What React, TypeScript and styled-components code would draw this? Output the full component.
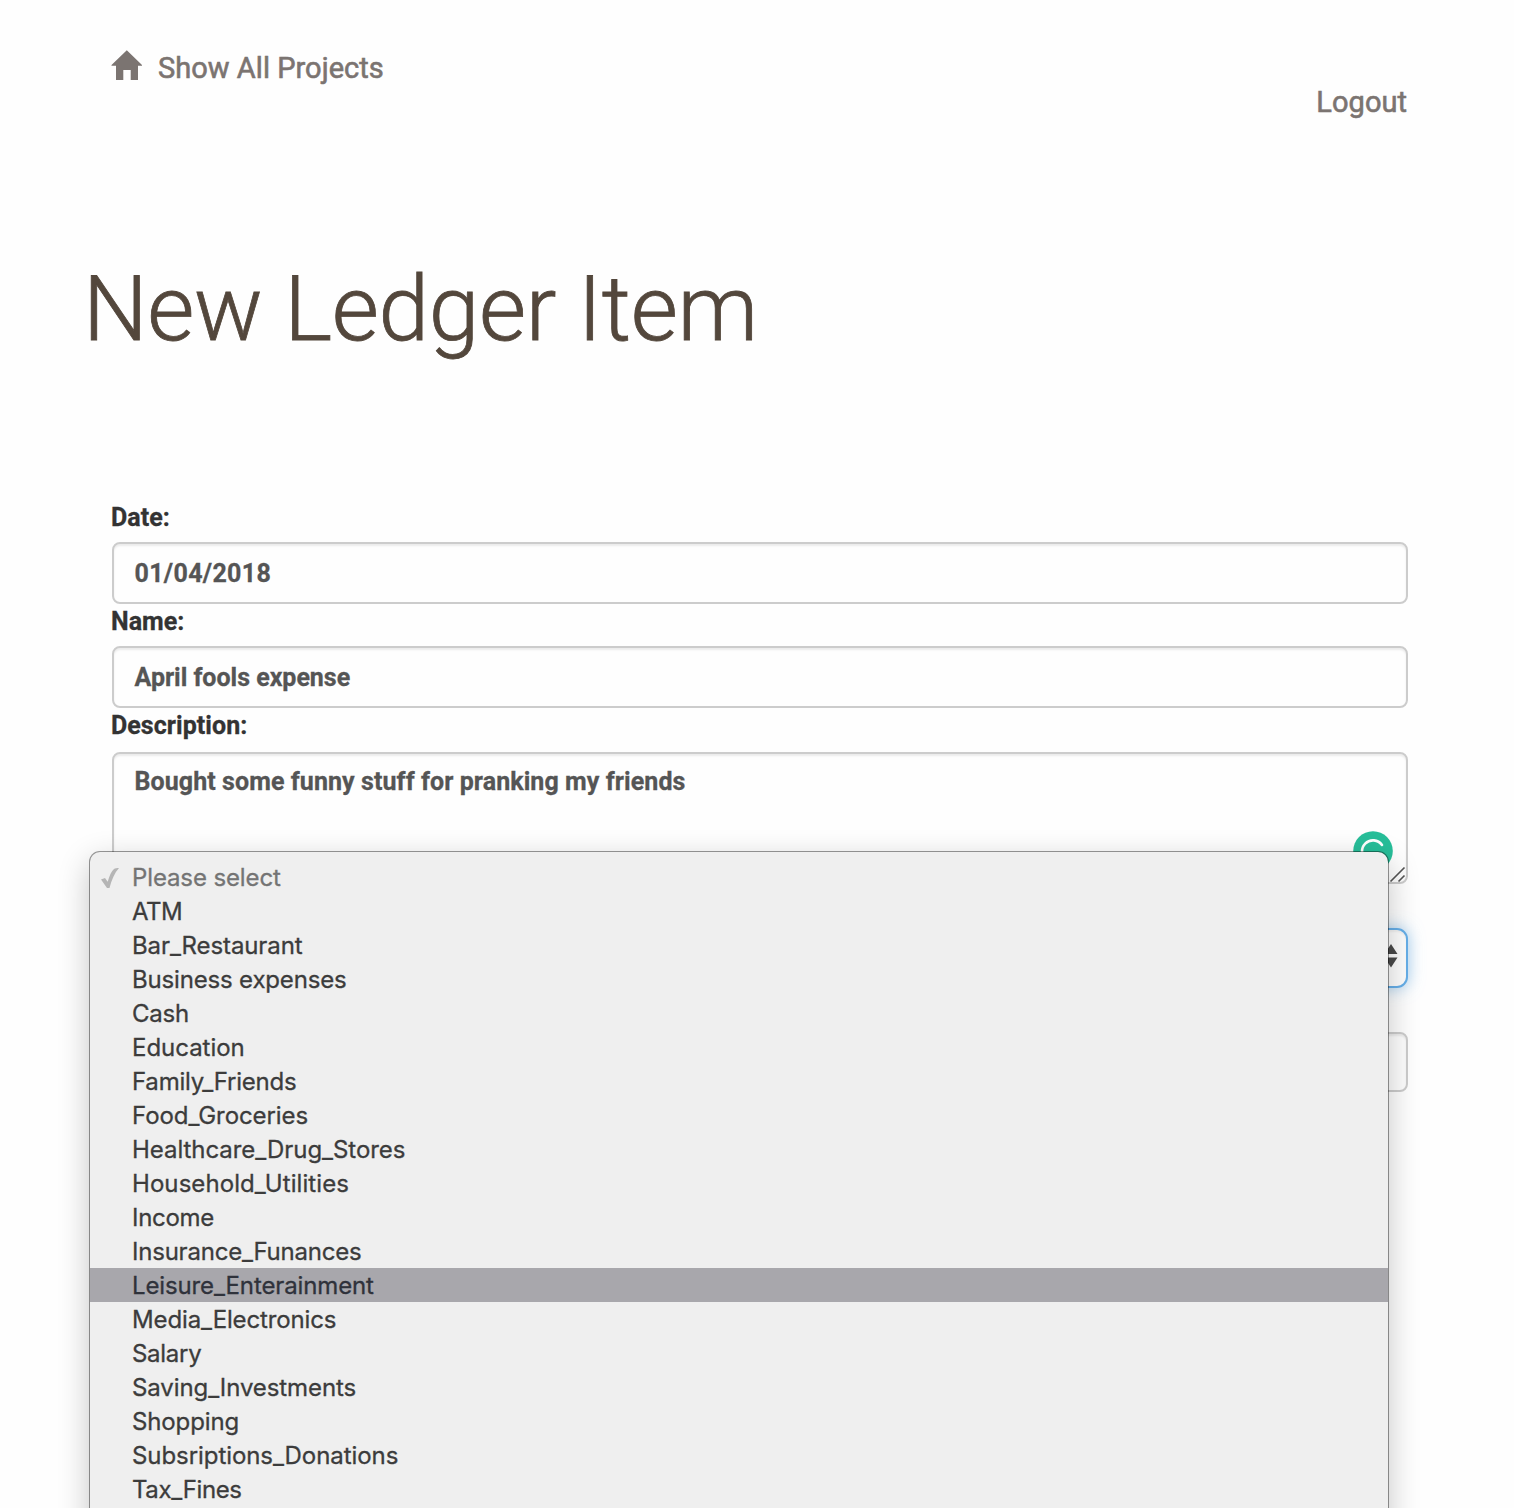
import React from "react";
import styled, { createGlobalStyle } from "styled-components";

const GlobalStyle = createGlobalStyle`
  * { box-sizing: border-box; }
  html, body { margin: 0; padding: 0; background: #fefefe; }
  body { font-family: Roboto, "Liberation Sans", sans-serif; color: #333; overflow: hidden; }
`;

const Page = styled.div`
  position: relative;
  height: 1508px;
  overflow: hidden;
  display: flex;
  flex-direction: column;
  background: #fefefe;
`;

const NavBar = styled.nav`
  height: 150px;
  padding: 48px 107px 0 111px;
  display: flex;
  justify-content: space-between;
  align-items: flex-start;
`;

const NavLink = styled.a<{ $drop?: number }>`
  display: flex;
  align-items: flex-start;
  gap: 15px;
  margin-top: ${(p) => p.$drop ?? 0}px;
  color: #7b7471;
  font-size: 29px;
  line-height: 40px;
  letter-spacing: 0.03px;
  -webkit-text-stroke: 0.6px currentColor;
  white-space: nowrap;
  text-decoration: none;
`;

const HomeGlyph = styled.svg`
  width: 32px;
  height: 32px;
  margin-top: 2px;
`;

const Title = styled.h1`
  margin: 99px 0 0 83px;
  height: 120px;
  font-size: 91px;
  font-weight: 300;
  line-height: 120px;
  letter-spacing: -0.34px;
  -webkit-text-stroke: 0.8px currentColor;
  color: #53473c;
  white-space: nowrap;
`;

const Form = styled.form`
  margin: 131px 106px 0 112px;
  display: flex;
  flex-direction: column;
`;

const Label = styled.label<{ $height?: number }>`
  height: ${(p) => p.$height ?? 42}px;
  margin-left: -1px;
  padding-top: 1px;
  font-size: 25px;
  font-weight: 700;
  line-height: 34px;
  letter-spacing: 0.05px;
  -webkit-text-stroke: 0.3px currentColor;
  color: #333;
  white-space: nowrap;
`;

const Control = styled.div<{ $height: number; $focus?: boolean; $gap?: number; $multiline?: boolean }>`
  position: relative;
  height: ${(p) => p.$height}px;
  margin-top: ${(p) => p.$gap ?? 0}px;
  padding: ${(p) => (p.$multiline ? 9 : 11)}px 20px 0 20.5px;
  border: 2px solid ${(p) => (p.$focus ? "#66afe9" : "#ccc")};
  border-radius: ${(p) => (p.$focus ? 11 : 8)}px;
  background: #fefefe;
  box-shadow: ${(p) =>
    p.$focus
      ? "inset 0 2px 2px rgba(0,0,0,.05), 0 0 16px rgba(102,175,233,.6)"
      : "inset 0 2px 2px rgba(0,0,0,.075)"};
  font-size: 25px;
  font-weight: 700;
  line-height: 38px;
  color: #555;
  -webkit-text-stroke: 0.3px currentColor;
`;

const Value = styled.span<{ $spacing?: number }>`
  letter-spacing: ${(p) => p.$spacing ?? 0}px;
  white-space: nowrap;
`;

const ResizeGrip = styled.svg`
  position: absolute;
  right: -1px;
  bottom: -1px;
  width: 18px;
  height: 18px;
`;

const Assistant = styled.svg`
  position: absolute;
  right: 13px;
  bottom: 11px;
  width: 40px;
  height: 40px;
`;

const SelectArrows = styled.svg`
  position: absolute;
  right: 8px;
  top: 13px;
  width: 14px;
  height: 25px;
`;

const Menu = styled.ul`
  position: absolute;
  left: 90px;
  top: 852px;
  width: 1298px;
  height: 700px;
  margin: 0;
  padding: 8px 0 0;
  list-style: none;
  border-radius: 10px;
  background: #efefef;
  box-shadow: 0 0 0 1px rgba(0, 0, 0, 0.4), 0 10px 32px rgba(0, 0, 0, 0.24);
`;

const Option = styled.li<{ $active?: boolean; $muted?: boolean; $spacing: number }>`
  display: flex;
  align-items: center;
  height: 34px;
  padding-top: 2px;
  font-family: Inter, "Liberation Sans", sans-serif;
  font-size: 24px;
  line-height: 32px;
  letter-spacing: ${(p) => p.$spacing}px;
  -webkit-text-stroke: 0.3px currentColor;
  white-space: nowrap;
  color: ${(p) => (p.$active ? "#2f323b" : p.$muted ? "#747474" : "#3c3c3c")};
  background: ${(p) => (p.$active ? "#a8a7ac" : "transparent")};
`;

const Mark = styled.span`
  display: flex;
  width: 42px;
  flex: none;
  padding-left: 11px;
`;

const options = [
  { name: "ATM", spacing: -0.55 },
  { name: "Bar_Restaurant", spacing: -0.1 },
  { name: "Business expenses", spacing: -0.17 },
  { name: "Cash", spacing: -0.25 },
  { name: "Education", spacing: -0.03 },
  { name: "Family_Friends", spacing: -0.21 },
  { name: "Food_Groceries", spacing: -0.08 },
  { name: "Healthcare_Drug_Stores", spacing: -0.05 },
  { name: "Household_Utilities", spacing: 0.07 },
  { name: "Income", spacing: -0.28 },
  { name: "Insurance_Funances", spacing: -0.22 },
  { name: "Leisure_Enterainment", spacing: -0.13 },
  { name: "Media_Electronics", spacing: -0.13 },
  { name: "Salary", spacing: -0.28 },
  { name: "Saving_Investments", spacing: -0.09 },
  { name: "Shopping", spacing: -0.13 },
  { name: "Subsriptions_Donations", spacing: -0.07 },
  { name: "Tax_Fines", spacing: -0.36 },
];

export default function App() {
  return (
    <>
      <GlobalStyle />
      <Page>
        <NavBar>
          <NavLink>
            <HomeGlyph viewBox="0 0 32 32">
              <path d="M15.800 0.300 31 15v.700h-4V30h-7.300V20h-7.400v10H5V15.700H.500V15Z" fill="#7b7471" />
            </HomeGlyph>
            Show All Projects
          </NavLink>
          <NavLink $drop={34}>Logout</NavLink>
        </NavBar>
        <Title>New Ledger Item</Title>
        <Form>
          <Label $height={42}>Date:</Label>
          <Control $height={62}>
            <Value $spacing={0.33}>01/04/2018</Value>
          </Control>
          <Label>Name:</Label>
          <Control $height={62}>
            <Value $spacing={-0.02}>April fools expense</Value>
          </Control>
          <Label $height={44}>Description:</Label>
          <Control $height={132} $multiline>
            <Value $spacing={0.08}>Bought some funny stuff for pranking my friends</Value>
            <Assistant viewBox="0 0 40 40">
              <circle cx="20" cy="20" r="19.800" fill="#27be99" />
              <path d="M29 14A11 11 0 1 0 30 25" fill="none" stroke="#fff" strokeWidth="2.600" strokeLinecap="round" />
            </Assistant>
            <ResizeGrip viewBox="0 0 18 18">
              <path d="M1.500 16.500 15.500 2.500M9.500 16.500l6-6" stroke="#555" strokeWidth="1.600" />
            </ResizeGrip>
          </Control>
          <Control $height={60} $gap={44} $focus>
            <SelectArrows viewBox="0 0 14 25">
              <path d="M7 1l6.500 10H.500ZM.500 14.500h13L7 24.500Z" fill="#4a4a4a" />
            </SelectArrows>
          </Control>
          <Control $height={60} $gap={44} />
        </Form>
        <Menu>
          <Option $muted $spacing={-0.12}>
            <Mark>
              <svg width="18" height="20" viewBox="0 0 18 20">
                <path d="M0 11.500 4 10l2.700 3.700C8.500 7.500 10.500 3 13 1c1-.8 3-1 5-1C13.500 5 10.500 12 8.500 20H6Z" fill="#b5b5b5" />
              </svg>
            </Mark>
            Please select
          </Option>
          {options.map((o) => (
            <Option key={o.name} $spacing={o.spacing} $active={o.name === "Leisure_Enterainment"}>
              <Mark />
              {o.name}
            </Option>
          ))}
        </Menu>
      </Page>
    </>
  );
}
